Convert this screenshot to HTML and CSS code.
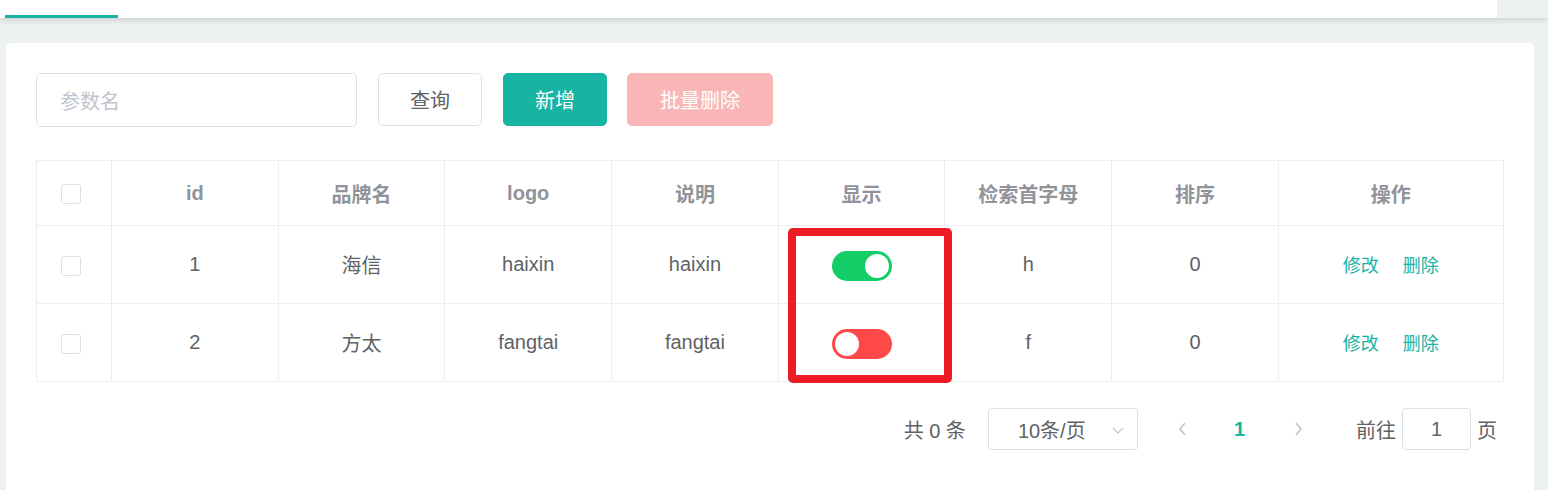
FILE: index.html
```html
<!DOCTYPE html>
<html lang="zh">
<head>
<meta charset="utf-8">
<title>品牌管理</title>
<link rel="stylesheet" href="styles.css">
</head>
<body>
<div class="topbar">
  <div class="tab-active"></div>
  <div class="topbar-fill"></div>
  <div class="topbar-side"></div>
</div>
<div class="main">
  <div class="card">
    <div class="toolbar">
      <div class="search"><span class="placeholder">参数名</span></div>
      <button class="btn btn-default">查询</button>
      <button class="btn btn-primary">新增</button>
      <button class="btn btn-danger-disabled">批量删除</button>
    </div>
    <div class="table-wrap">
      <table class="grid">
        <colgroup>
          <col class="c-check"><col class="c-std"><col class="c-std"><col class="c-std"><col class="c-std"><col class="c-std"><col class="c-std"><col class="c-std"><col class="c-op">
        </colgroup>
        <thead>
          <tr>
            <th><span class="checkbox"></span></th>
            <th>id</th><th>品牌名</th><th>logo</th><th>说明</th><th>显示</th><th>检索首字母</th><th>排序</th><th>操作</th>
          </tr>
        </thead>
        <tbody>
          <tr>
            <td><span class="checkbox"></span></td>
            <td>1</td><td>海信</td><td>haixin</td><td>haixin</td>
            <td><span class="switch on"><span class="knob"></span></span></td>
            <td>h</td><td>0</td>
            <td><a class="link">修改</a><a class="link">删除</a></td>
          </tr>
          <tr>
            <td><span class="checkbox"></span></td>
            <td>2</td><td>方太</td><td>fangtai</td><td>fangtai</td>
            <td><span class="switch off"><span class="knob"></span></span></td>
            <td>f</td><td>0</td>
            <td><a class="link">修改</a><a class="link">删除</a></td>
          </tr>
        </tbody>
      </table>
      <div class="highlight"></div>
    </div>
    <div class="pager">
      <span class="total">共 0 条</span>
      <div class="size-select"><span>10条/页</span>
        <svg class="caret" width="14" height="14" viewBox="0 0 14 14"><path d="M2 5 L7 10 L12 5" fill="none" stroke="#c0c4cc" stroke-width="1.2"/></svg>
      </div>
      <svg class="nav prev" width="14" height="16" viewBox="0 0 14 16"><path d="M9 2 L4 8 L9 14" fill="none" stroke="#c0c4cc" stroke-width="1.6"/></svg>
      <span class="page-num">1</span>
      <svg class="nav next" width="14" height="16" viewBox="0 0 14 16"><path d="M5 2 L10 8 L5 14" fill="none" stroke="#c0c4cc" stroke-width="1.6"/></svg>
      <span class="goto">前往</span>
      <div class="goto-input">1</div>
      <span class="goto-unit">页</span>
    </div>
  </div>
</div>
</body>
</html>
```
FILE: styles.css
```css
* { box-sizing: border-box; }
html, body { margin: 0; padding: 0; }
body {
  width: 1548px;
  height: 490px;
  overflow: hidden;
  background: #eef1f2;
  font-family: "Liberation Sans", "Noto Sans CJK SC", sans-serif;
  color: #606266;
}
.topbar {
  display: flex;
  height: 18px;
  background: #fff;
  box-shadow: 0 2px 6px rgba(0,0,0,0.15);
  position: relative;
  z-index: 1;
}
.tab-active {
  width: 113px;
  margin-left: 5px;
  border-bottom: 3px solid #17b3a3;
}
.topbar-fill { flex: 1; }
.topbar-side { width: 51px; background: #eef1f2; }
.main {
  padding: 25px 14px 0 6px;
}
.card {
  background: #fff;
  border-radius: 5px;
  height: 470px;
  padding: 30px 31px 0 30px;
}
.toolbar {
  display: flex;
  align-items: flex-start;
  gap: 21px;
  height: 54px;
}
.search {
  width: 321px;
  height: 54px;
  border: 1px solid #dcdfe6;
  border-radius: 5px;
  display: flex;
  align-items: center;
  padding-left: 23px;
}
.placeholder { color: #c0c4cc; font-size: 20px; }
.btn {
  height: 53px;
  border-radius: 5px;
  font-size: 20px;
  font-family: inherit;
  border: 1px solid #dcdfe6;
  background: #fff;
  color: #606266;
  padding: 0;
}
.btn-default { width: 104px; }
.btn-primary { width: 104px; background: #17b3a3; border-color: #17b3a3; color: #fff; }
.btn-danger-disabled { width: 146px; background: #fab6b6; border-color: #fab6b6; color: #fff; margin-left: -1px; }
.table-wrap {
  position: relative;
  margin-top: 33px;
}
.grid {
  width: 1467px;
  border-collapse: collapse;
  table-layout: fixed;
}
.c-check { width: 75px; }
.c-std { width: 166.7px; }
.c-op { width: 225px; }
.grid th, .grid td {
  border: 1px solid #ebeef5;
  text-align: center;
  padding: 0;
  font-size: 20px;
}
.grid th {
  height: 65px;
  color: #909399;
  font-weight: bold;
}
.grid td { height: 78px; color: #606266; }
.checkbox {
  display: inline-block;
  width: 20px;
  height: 20px;
  border: 1px solid #dcdfe6;
  border-radius: 3px;
  vertical-align: middle;
  margin-left: -7px;
}
.switch {
  display: inline-block;
  position: relative;
  width: 60px;
  height: 30px;
  border-radius: 15px;
  vertical-align: middle;
  margin-top: 2px;
}
.switch.on { background: #13ce66; }
.switch.off { background: #ff4949; }
.knob {
  position: absolute;
  top: 3px;
  width: 24px;
  height: 24px;
  border-radius: 50%;
  background: #fff;
}
.switch.on .knob { right: 3px; }
.switch.off .knob { left: 3px; }
.link {
  color: #17b3a3;
  font-size: 18px;
  margin: 0 12px;
  position: relative;
  top: -1px;
}
.highlight {
  position: absolute;
  left: 752px;
  top: 68px;
  width: 164px;
  height: 155px;
  border: 8px solid #ed1c24;
  border-radius: 5px;
}
.pager {
  display: flex;
  justify-content: flex-end;
  align-items: center;
  margin-top: 26px;
  padding-right: 6px;
  height: 42px;
  font-size: 20px;
  color: #606266;
}
.total { margin-right: 22px; }
.size-select {
  width: 150px;
  height: 42px;
  border: 1px solid #dcdfe6;
  border-radius: 4px;
  display: flex;
  align-items: center;
  padding-left: 29px;
  position: relative;
}
.caret { position: absolute; right: 12px; top: 14px; }
.nav.prev { margin-left: 38px; }
.page-num {
  color: #17b3a3;
  font-weight: bold;
  margin: 0 46px 0 44px;
}
.goto { margin-left: 51px; margin-right: 6px; }
.goto-input {
  width: 69px;
  height: 42px;
  border: 1px solid #dcdfe6;
  border-radius: 4px;
  display: flex;
  align-items: center;
  justify-content: center;
}
.goto-unit { margin-left: 6px; }
```
